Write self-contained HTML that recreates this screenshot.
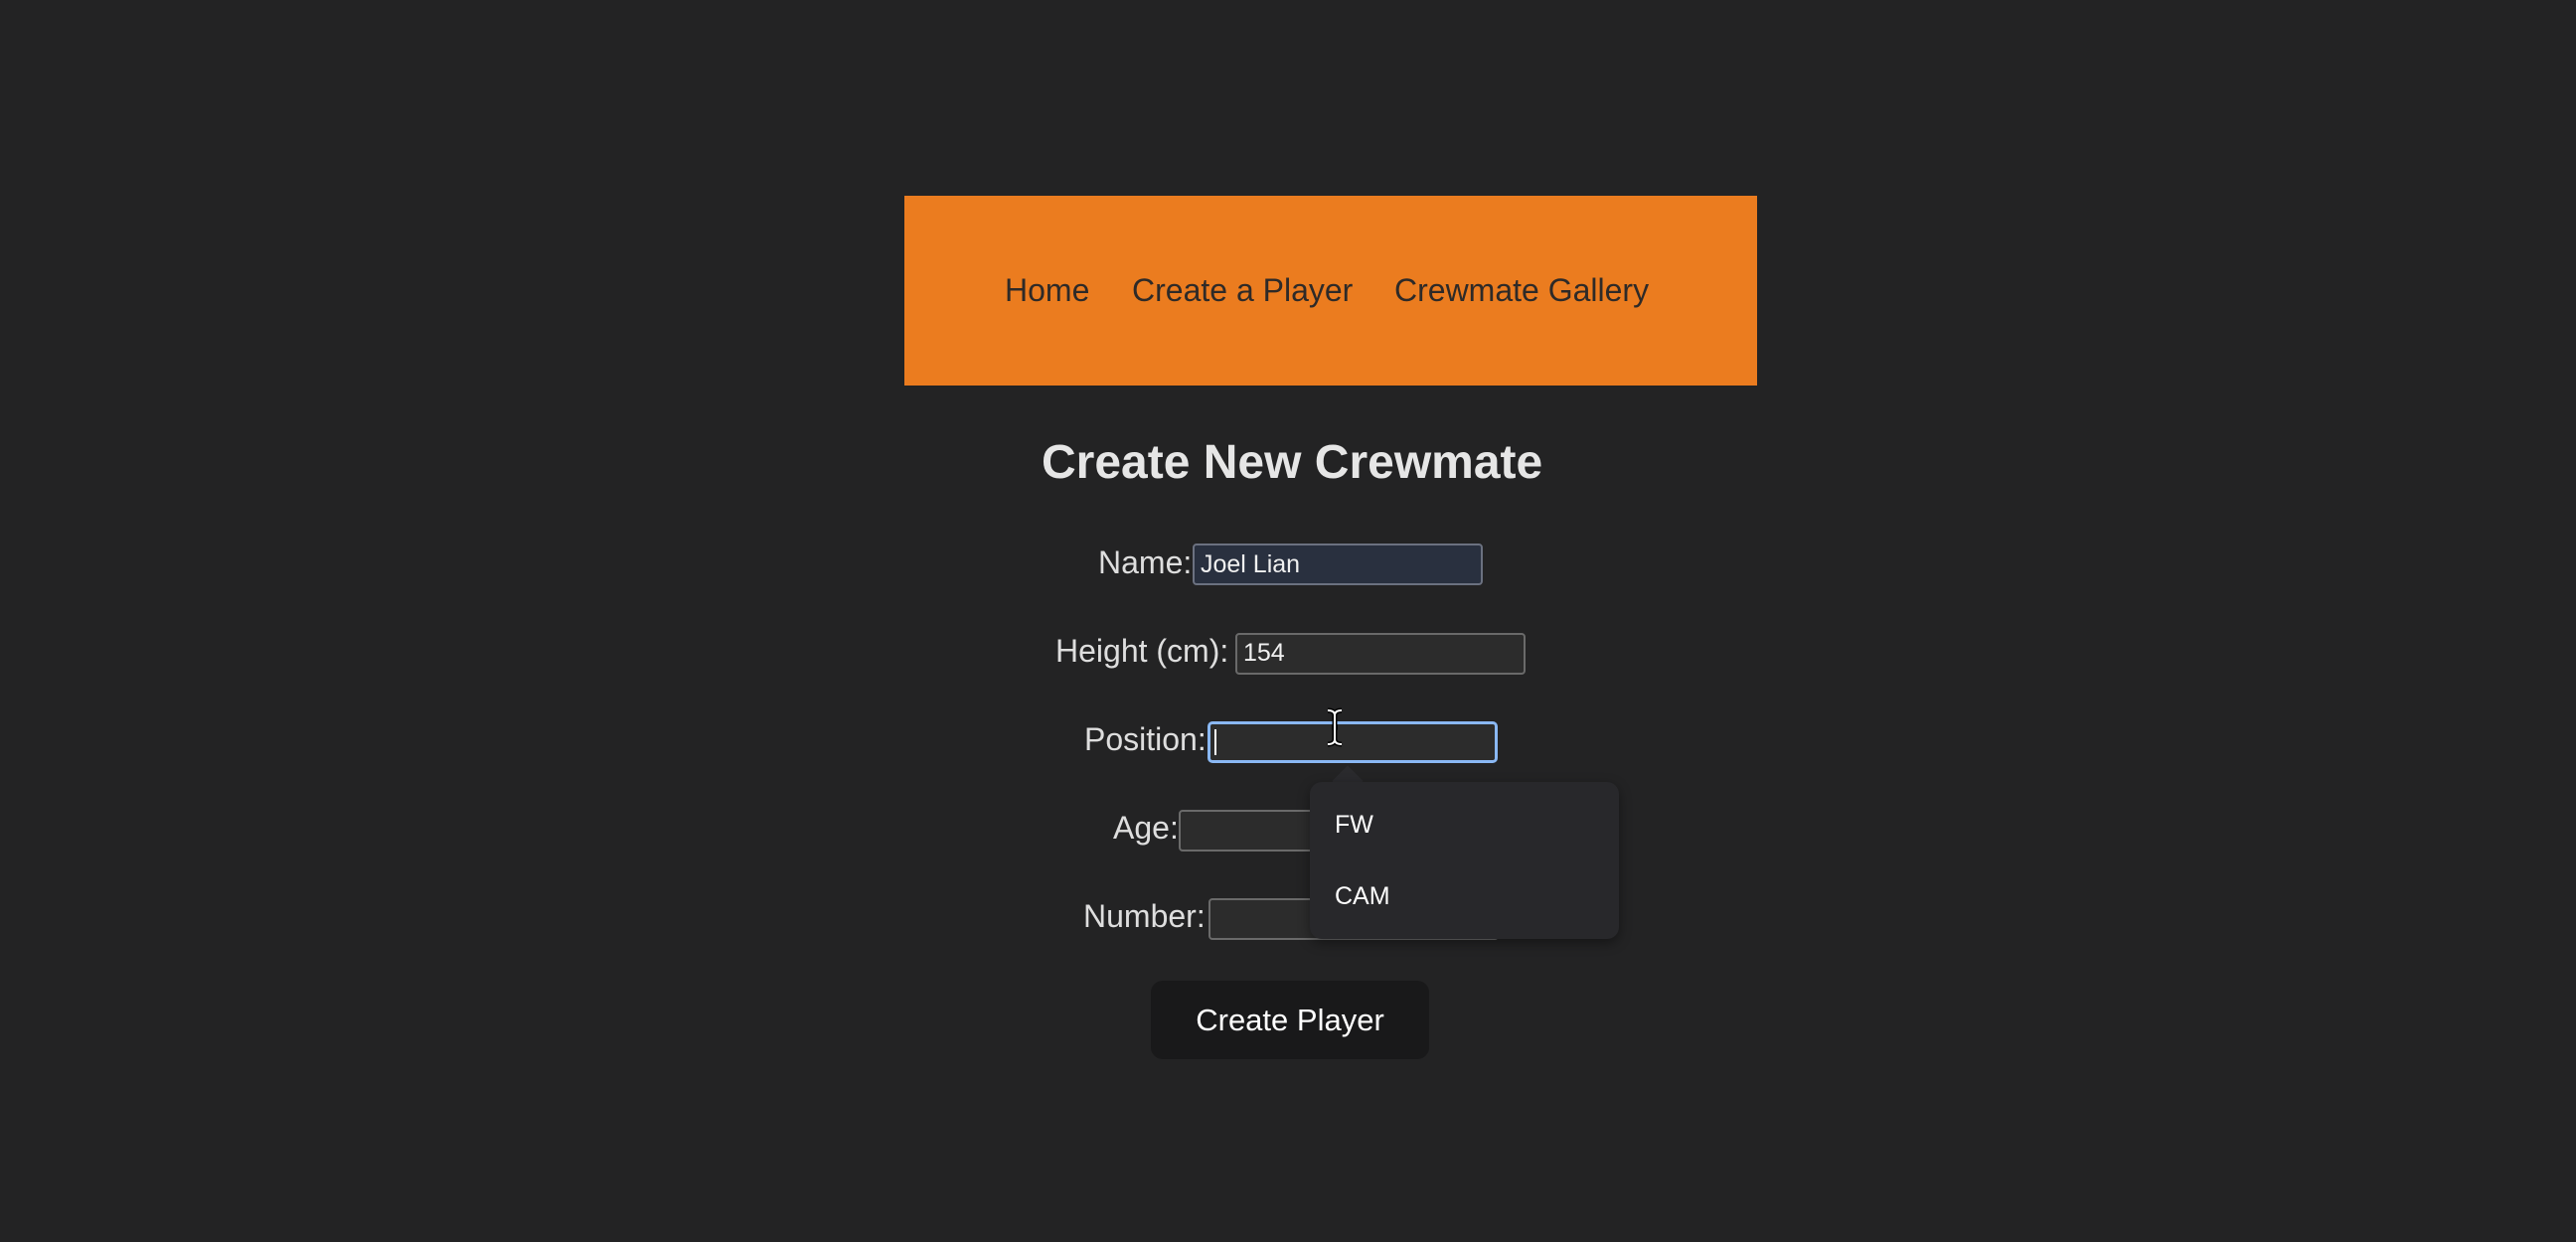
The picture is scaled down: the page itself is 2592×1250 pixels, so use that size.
<!DOCTYPE html>
<html><head><meta charset="utf-8"><style>
html,body{margin:0;padding:0;width:2592px;height:1250px;background:#232324;overflow:hidden;font-family:"Liberation Sans",sans-serif;}
.a{position:absolute;line-height:1;white-space:nowrap}
.nav{position:absolute;left:910px;top:197px;width:858px;height:191px;background:#eb7c1f}
.nt{color:#2e2a28;font-size:32px}
.lbl{color:rgba(255,255,255,.85);font-size:32px}
.inp{position:absolute;width:288px;height:38px;border:2px solid #6a6a6a;border-radius:4px;background:#2c2c2c;box-sizing:content-box}
.it{color:#f0f0f0;font-size:25px}
</style></head><body>
<div class="nav"></div>
<div class="a nt" style="left:1011px;top:276px">Home</div>
<div class="a nt" style="left:1139px;top:276px">Create a Player</div>
<div class="a nt" style="left:1403px;top:276px">Crewmate Gallery</div>
<div class="a" style="left:1048px;top:442px;font-size:48px;font-weight:bold;color:#e6e6e6">Create New Crewmate</div>

<div class="a lbl" style="left:1105px;top:550px">Name:</div>
<div class="inp" style="left:1200px;top:547px;background:#29303f;border-color:#6b7180"></div>
<div class="a it" style="left:1208px;top:556px">Joel Lian</div>

<div class="a lbl" style="left:1062px;top:639px">Height (cm):</div>
<div class="inp" style="left:1243px;top:637px"></div>
<div class="a it" style="left:1251px;top:645px">154</div>

<div class="a lbl" style="left:1091px;top:728px">Position:</div>
<div class="inp" style="left:1215px;top:726px;border:3px solid #8ab8f4;width:286px;height:36px;border-radius:5px"></div>
<div class="a" style="left:1222px;top:734px;width:2px;height:26px;background:#fff"></div>
<svg class="a" style="left:1333px;top:712px" width="20" height="40" viewBox="0 0 20 40"><path d="M3 3 Q10 3 10 8 V32 Q10 37 3 37 M17 3 Q10 3 10 8 M17 37 Q10 37 10 32 M7 20 H13" stroke="#000" stroke-width="5" fill="none"/><path d="M3 3 Q10 3 10 8 V32 Q10 37 3 37 M17 3 Q10 3 10 8 M17 37 Q10 37 10 32" stroke="#fff" stroke-width="2" fill="none"/></svg>

<div class="a lbl" style="left:1120px;top:817px">Age:</div>
<div class="inp" style="left:1186px;top:815px"></div>

<div class="a lbl" style="left:1090px;top:906px">Number:</div>
<div class="inp" style="left:1216px;top:904px"></div>

<div class="a" style="left:1345px;top:775px;width:22px;height:22px;background:#2a2a2d;transform:rotate(45deg)"></div>
<div class="a" style="left:1318px;top:787px;width:311px;height:158px;background:#28282b;border-radius:12px;box-shadow:0 4px 12px rgba(0,0,0,.4)"></div>
<div class="a it" style="left:1343px;top:818px;color:#fff">FW</div>
<div class="a it" style="left:1343px;top:890px;color:#fff">CAM</div>

<div class="a" style="left:1158px;top:987px;width:280px;height:79px;background:#19191a;border-radius:12px"></div>
<div class="a" style="left:1158px;top:1011px;width:280px;text-align:center;font-size:31px;color:#fff">Create Player</div>
</body></html>
